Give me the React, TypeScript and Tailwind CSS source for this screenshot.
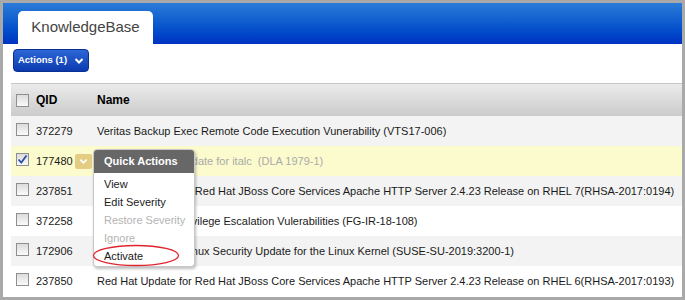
import React from "react";

type Row = { qid: string; name: string; checked?: boolean };

const rows: Row[] = [
  { qid: "372279", name: "Veritas Backup Exec Remote Code Execution Vunerability (VTS17-006)" },
  { qid: "177480", name: "Debian Security Update for italc  (DLA 1979-1)", checked: true },
  { qid: "237851", name: "Red Hat Update for Red Hat JBoss Core Services Apache HTTP Server 2.4.23 Release on RHEL 7(RHSA-2017:0194)" },
  { qid: "372258", name: "Fortinet FortiOS Privilege Escalation Vulerabilities (FG-IR-18-108)" },
  { qid: "172906", name: "SUSE Enterprise Linux Security Update for the Linux Kernel (SUSE-SU-2019:3200-1)" },
  { qid: "237850", name: "Red Hat Update for Red Hat JBoss Core Services Apache HTTP Server 2.4.23 Release on RHEL 6(RHSA-2017:0193)" },
];

const Check = ({ checked }: { checked?: boolean }) => (
  <span className="w-[13px] h-[13px] border border-[#8f8f8f] bg-gradient-to-b from-[#dcdcdc] to-[#fafafa] flex items-center justify-center shrink-0">
    {checked && (
      <svg width="11" height="11" viewBox="0 0 11 11">
        <path d="M1.5 5.5 L4.3 8.5 L9.5 1.5" fill="none" stroke="#2a4fa8" strokeWidth="1.8" />
      </svg>
    )}
  </span>
);

const Chevron = ({ size = 9 }: { size?: number }) => (
  <svg width={size} height={size} viewBox="0 0 10 10">
    <path d="M1.5 3 L5 6.5 L8.5 3" fill="none" stroke="white" strokeWidth="2" />
  </svg>
);

const App = () => {
  return (
    <div className="w-[685px] h-[300px] bg-[#a9a9a9] p-[3px] font-['Liberation_Sans',Arial,sans-serif]">
      <div className="bg-white h-full flex flex-col">
        <div className="h-[41px] bg-gradient-to-b from-[#2a7bd8] to-[#0131c3] flex items-end pl-[15px]">
          <div className="w-[135px] h-[33px] bg-white rounded-t-[5px] flex items-center justify-center text-[15px] text-[#444]">
            KnowledgeBase
          </div>
        </div>
        <div className="h-[39px] pl-[10px] pt-[5px]">
          <button className="w-[76px] h-[23px] rounded-[4px] border border-[#0a2f8f] bg-gradient-to-b from-[#2d66d6] to-[#0b3ab0] flex items-center justify-center gap-[7px] text-white text-[9.5px] font-bold">
            Actions (1)
            <Chevron size={10} />
          </button>
        </div>
        <div className="relative ml-[8px] flex-1 text-[11px] text-[#1a1a1a]">
          <div className="h-[33px] border-t border-[#c6c6c6] bg-gradient-to-b from-[#ebebeb] to-[#cbcbcb] flex items-center pl-[5px]">
            <Check />
            <span className="w-[68px] shrink-0 pl-[7px] font-bold text-[12px] text-black">QID</span>
            <span className="font-bold text-[12px] text-black">Name</span>
          </div>
          {rows.map((r, i) => (
            <div
              key={r.qid}
              className={
                "h-[30px] flex items-center pl-[5px] whitespace-pre overflow-hidden " +
                (r.checked ? "bg-[#fbfbcd]" : i % 2 === 0 ? "bg-[#f3f3f3]" : "bg-white")
              }
            >
              <span className="-mt-[3px]">
                <Check checked={r.checked} />
              </span>
              <span className="w-[68px] shrink-0 pl-[7px] flex items-center relative">
                {r.qid}
                {r.checked && (
                  <span className="absolute left-[46px] w-[17px] h-[15px] rounded-[2px] bg-[#e2cd83] flex items-center justify-center">
                    <Chevron />
                  </span>
                )}
              </span>
              <span className={r.checked ? "text-[#aaa]" : ""}>{r.name}</span>
            </div>
          ))}

          <div className="absolute left-[82px] top-[66px] w-[102px] h-[118px] bg-white border border-[#c9c9c9] rounded-[4px] shadow-[1px_2px_3px_rgba(0,0,0,0.25)]">
            <div className="h-[23px] bg-[#676767] rounded-t-[3px] flex items-center pl-[10px] text-white font-bold text-[11px]">
              Quick Actions
            </div>
            <div className="flex flex-col pl-[10px] pt-[2px] text-[11px]">
              <span className="h-[18px] flex items-center">View</span>
              <span className="h-[18px] flex items-center">Edit Severity</span>
              <span className="h-[18px] flex items-center text-[#b3b3b3]">Restore Severity</span>
              <span className="h-[18px] flex items-center text-[#b3b3b3]">Ignore</span>
              <span className="h-[18px] flex items-center">Activate</span>
            </div>
          </div>
          <svg className="absolute left-[81px] top-[161px]" width="88" height="23" viewBox="0 0 88 23">
            <ellipse cx="44" cy="11.5" rx="42.5" ry="10" fill="none" stroke="#e0242f" strokeWidth="1.3" />
          </svg>
        </div>
      </div>
    </div>
  );
};

export default App;
